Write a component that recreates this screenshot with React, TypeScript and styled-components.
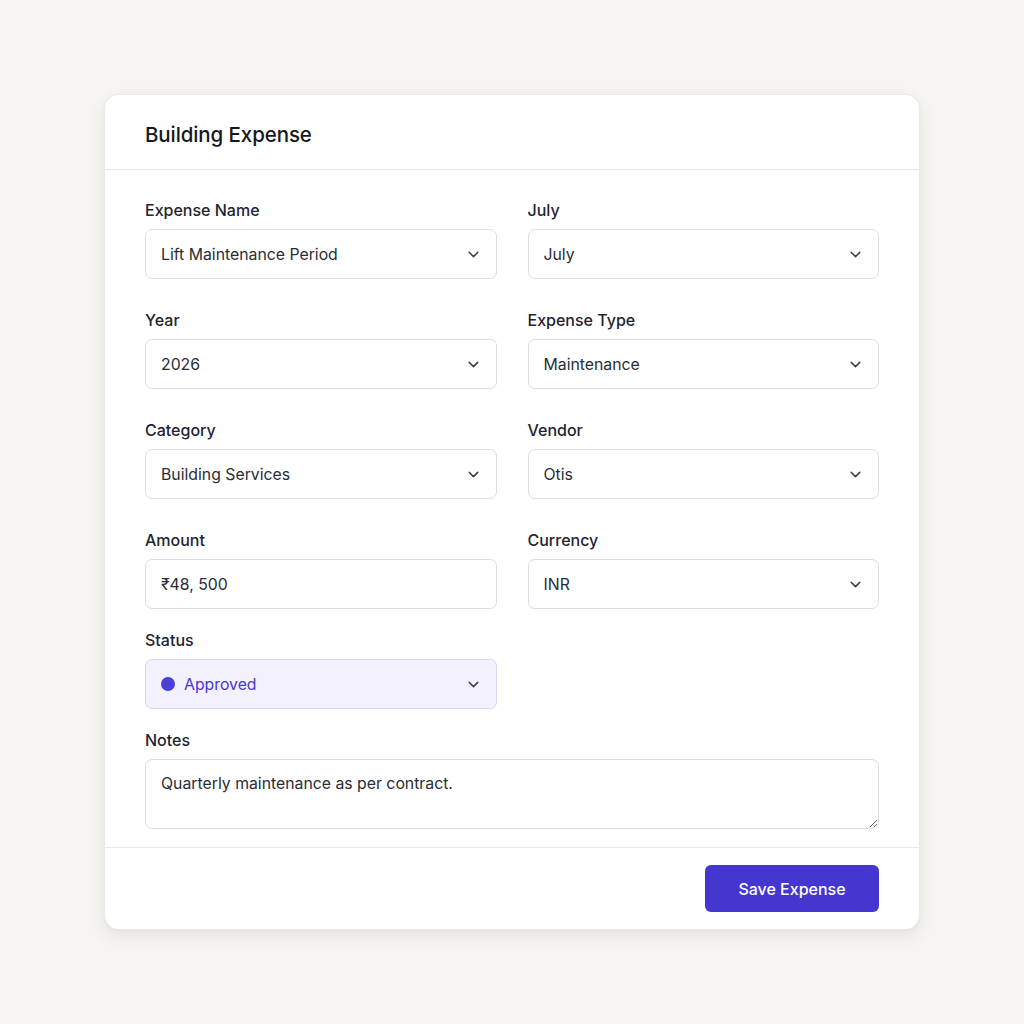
import styled, { createGlobalStyle } from "styled-components";
import { ChevronDown } from "lucide-react";

const GlobalStyle = createGlobalStyle`
  html, body {
    margin: 0;
    padding: 0;
    background: #f6f5f2;
    font-family: Inter, "Noto Sans", "Liberation Sans", sans-serif;
    color: #1f2430;
  }
  * {
    box-sizing: border-box;
  }
`;

const Page = styled.div`
  min-height: 1024px;
  padding-top: 95px;
  display: flex;
  justify-content: center;
  align-items: flex-start;
`;

const Card = styled.div`
  width: 814px;
  background: #ffffff;
  border-radius: 14px;
  box-shadow: 0 0 0 1px #ebeae6, 0 6px 18px rgba(60, 55, 40, 0.1),
    0 1px 3px rgba(60, 55, 40, 0.08);
  overflow: hidden;
`;

const Header = styled.div`
  height: 75px;
  padding: 5px 40px 0;
  display: flex;
  align-items: center;
  border-bottom: 1px solid #e7e7e7;
`;

const Title = styled.h2`
  margin: 0;
  font-size: 20.5px;
  font-weight: 500;
  color: #16181d;
  letter-spacing: -0.1px;
`;

const Body = styled.div`
  padding: 30px 40px 18px;
  display: flex;
  flex-direction: column;
  gap: 21px;
`;

const Grid = styled.div`
  display: grid;
  grid-template-columns: 1fr 1fr;
  column-gap: 31px;
  row-gap: 31px;
`;

const HalfRow = styled.div`
  display: grid;
  grid-template-columns: 1fr 1fr;
  column-gap: 31px;
`;

const Field = styled.div`
  display: flex;
  flex-direction: column;
  gap: 9px;
`;

const Label = styled.label`
  font-size: 16px;
  line-height: 20px;
  font-weight: 500;
  color: #1f2430;
`;

const Box = styled.div<{ $tone?: "accent" }>`
  height: 50px;
  padding: 0 14px 0 15px;
  display: flex;
  align-items: center;
  gap: 9px;
  border-radius: 7px;
  border: 1px solid ${(p) => (p.$tone === "accent" ? "#d8d4f2" : "#dedede")};
  background: ${(p) => (p.$tone === "accent" ? "#f3f1fd" : "#ffffff")};
  color: ${(p) => (p.$tone === "accent" ? "#4638c9" : "#2a2d34")};
  font-size: 15.8px;
`;

const Value = styled.span`
  flex: 1;
`;

const Chevron = styled(ChevronDown)`
  color: #3a3d44;
`;

const Dot = styled.span`
  width: 14px;
  height: 14px;
  border-radius: 50%;
  background: #4a3fd6;
`;

const Notes = styled.textarea`
  height: 70px;
  width: 100%;
  padding: 13px 15px;
  border-radius: 7px;
  border: 1px solid #dedede;
  font-family: inherit;
  font-size: 15.8px;
  line-height: 22px;
  color: #2a2d34;
  resize: vertical;
  outline: none;
`;

const Footer = styled.div`
  border-top: 1px solid #e7e7e7;
  padding: 17px 40px 17px;
  display: flex;
  justify-content: flex-end;
`;

const SaveButton = styled.button`
  width: 174px;
  height: 47px;
  border: none;
  border-radius: 6px;
  background: #4536d0;
  color: #ffffff;
  font-family: inherit;
  font-size: 16px;
  font-weight: 500;
  cursor: pointer;
`;

type SelectProps = { label: string; value: string; chevron?: boolean };

const SelectField = ({ label, value, chevron = true }: SelectProps) => (
  <Field>
    <Label>{label}</Label>
    <Box>
      <Value>{value}</Value>
      {chevron && <Chevron size={17} strokeWidth={2} />}
    </Box>
  </Field>
);

const App = () => {
  return (
    <>
      <GlobalStyle />
      <Page>
        <Card>
          <Header>
            <Title>Building Expense</Title>
          </Header>
          <Body>
            <Grid>
              <SelectField label="Expense Name" value="Lift Maintenance Period" />
              <SelectField label="July" value="July" />
              <SelectField label="Year" value="2026" />
              <SelectField label="Expense Type" value="Maintenance" />
              <SelectField label="Category" value="Building Services" />
              <SelectField label="Vendor" value="Otis" />
              <SelectField label="Amount" value="₹48, 500" chevron={false} />
              <SelectField label="Currency" value="INR" />
            </Grid>
            <HalfRow>
              <Field>
                <Label>Status</Label>
                <Box $tone="accent">
                  <Dot />
                  <Value>Approved</Value>
                  <Chevron size={17} strokeWidth={2} />
                </Box>
              </Field>
            </HalfRow>
            <Field>
              <Label>Notes</Label>
              <Notes defaultValue="Quarterly maintenance as per contract." />
            </Field>
          </Body>
          <Footer>
            <SaveButton>Save Expense</SaveButton>
          </Footer>
        </Card>
      </Page>
    </>
  );
};

export default App;
